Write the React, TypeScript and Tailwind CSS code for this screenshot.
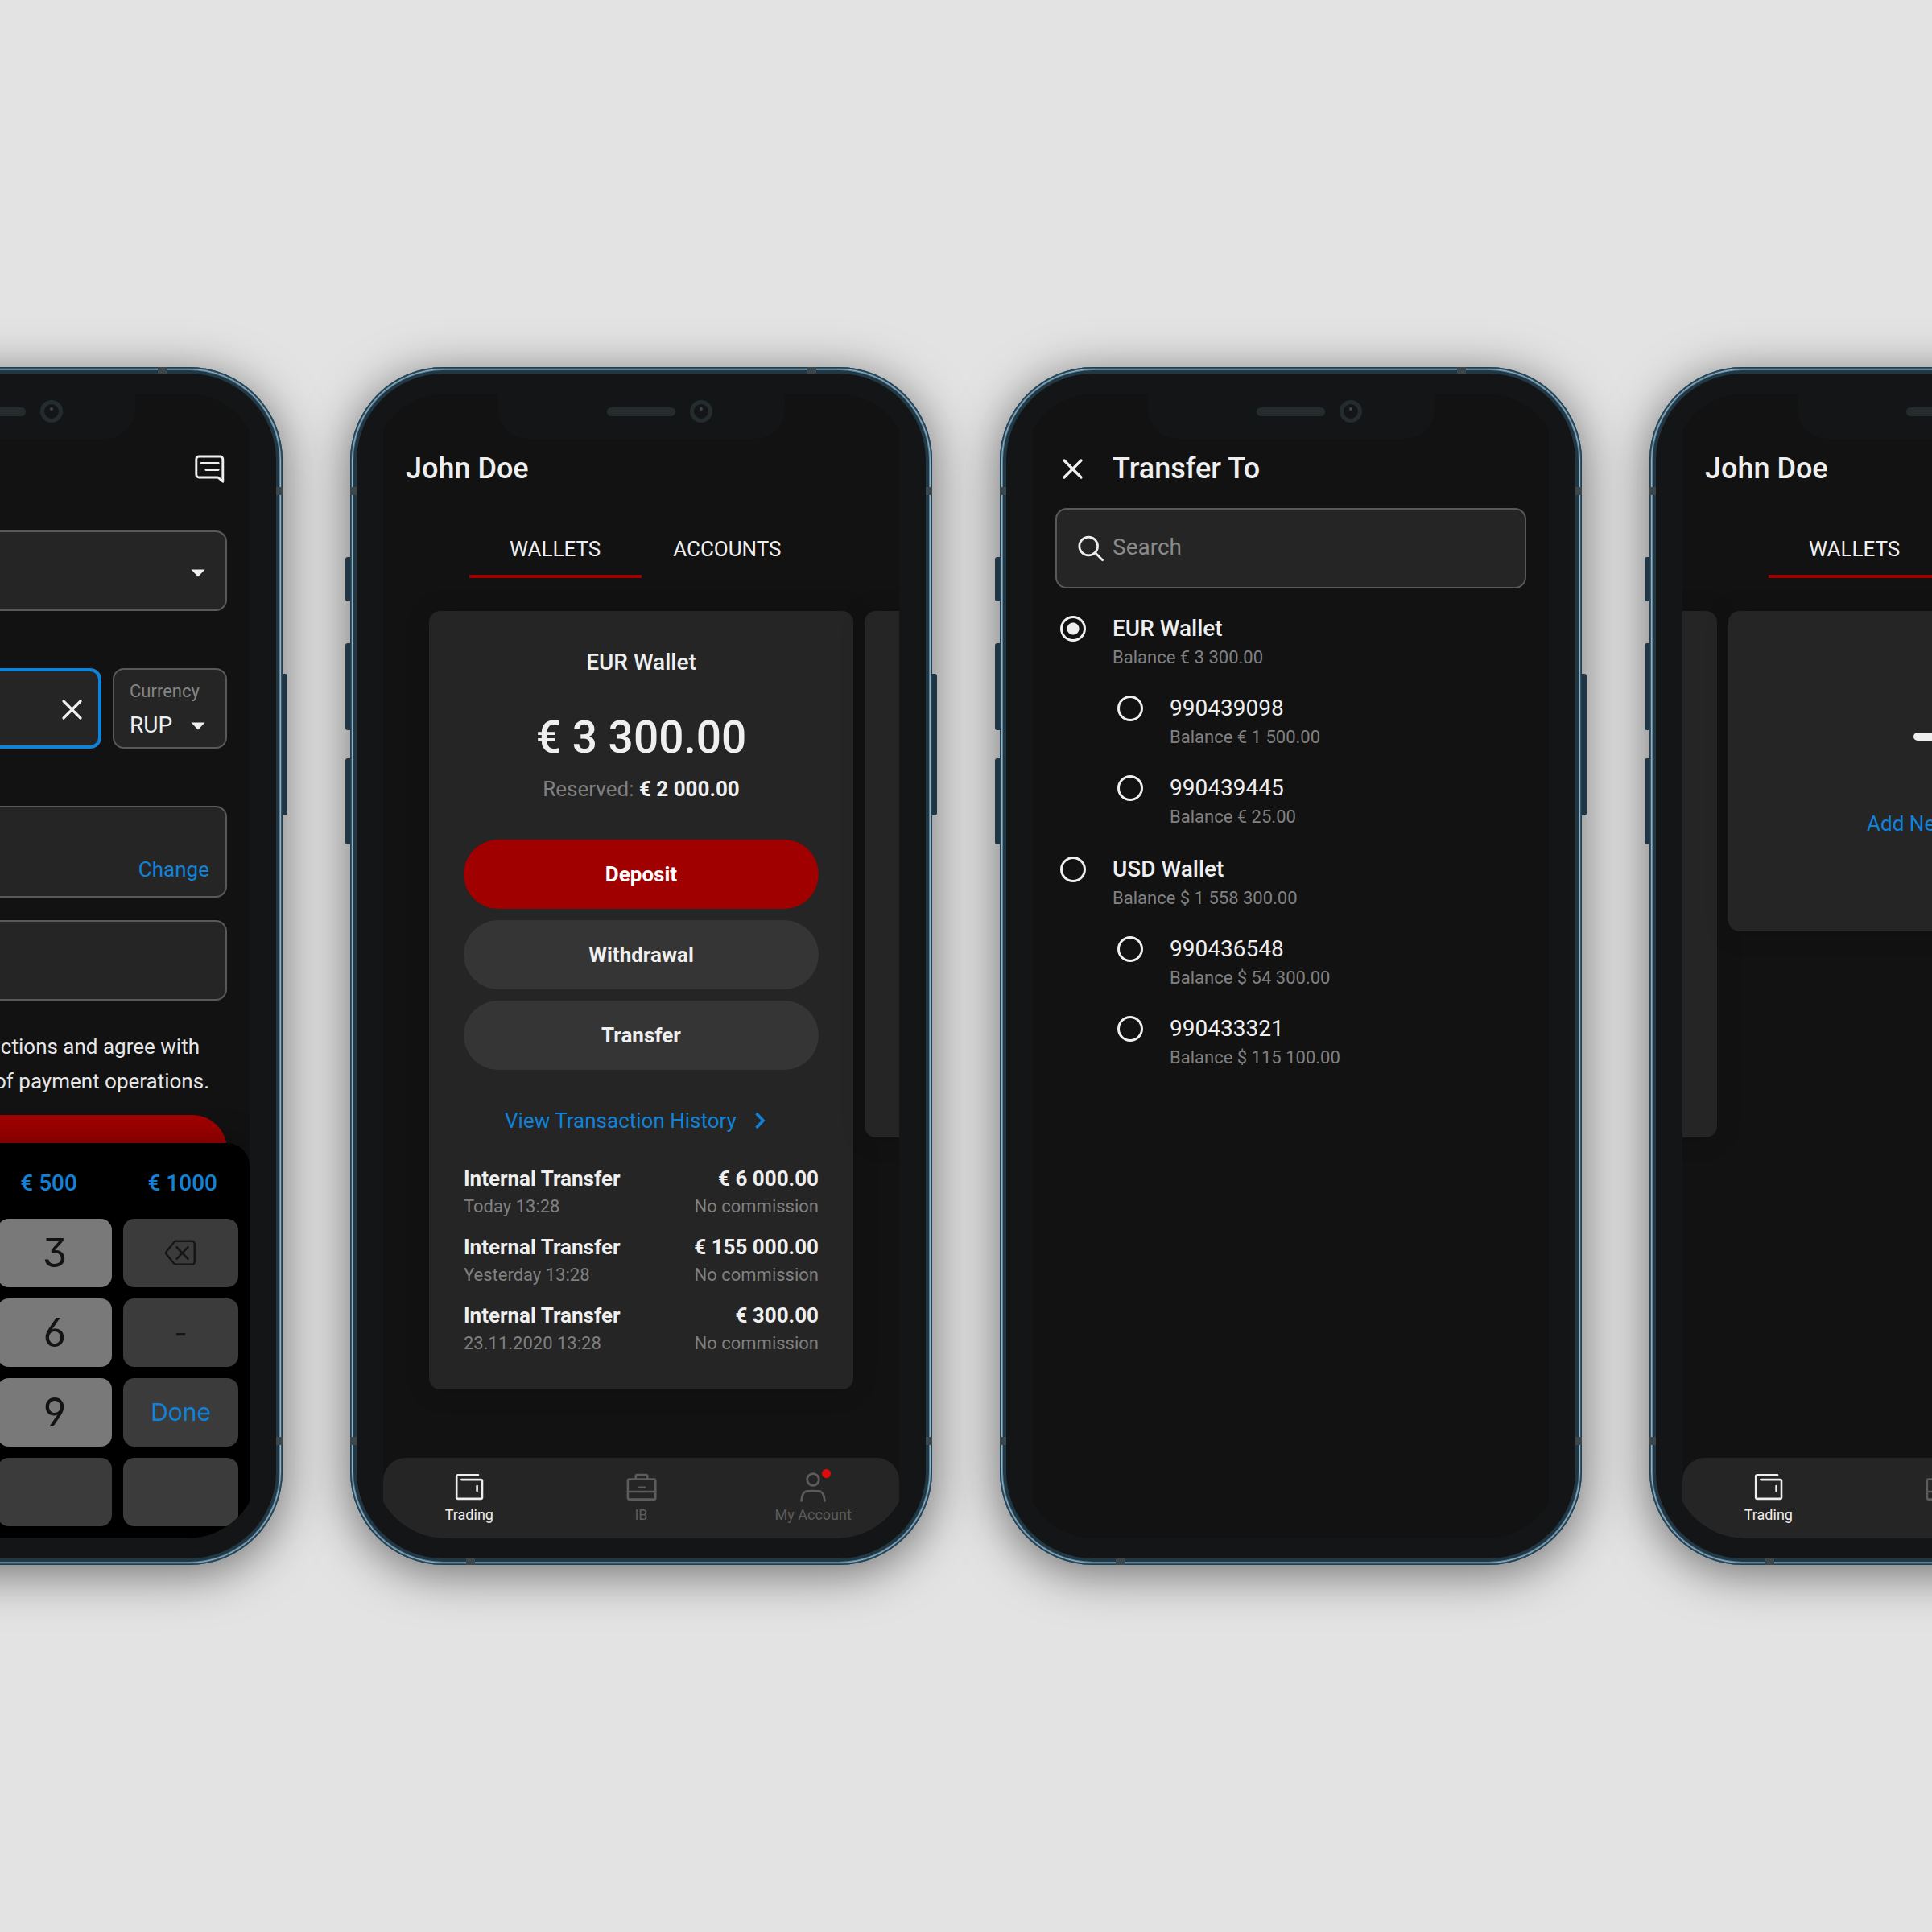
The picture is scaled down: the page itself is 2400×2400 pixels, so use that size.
import React from "react";

type IconProps = { className?: string };

const stroke = {
  fill: "none",
  stroke: "currentColor",
  strokeLinecap: "round" as const,
  strokeLinejoin: "round" as const,
};

const CloseIcon = ({ className = "" }: IconProps) => (
  <svg viewBox="0 0 43 43" className={`size-[43px] ${className}`} aria-hidden="true" {...stroke} strokeWidth={3.3}>
    <path d="M11 11 32 32M32 11 11 32" />
  </svg>
);

const ChatIcon = () => (
  <svg viewBox="0 0 43 43" className="size-[43px]" aria-hidden="true" {...stroke} strokeWidth={2.9}>
    <path d="M37.8 37.2V9.5A3.5 3.5 0 0 0 34.3 6h-26a3.5 3.5 0 0 0-3.5 3.5v19A3.5 3.5 0 0 0 8.3 32h23.4Z" />
    <path d="M11.2 14.5h21M16.8 22.5h15.4" />
  </svg>
);

const SearchIcon = () => (
  <svg viewBox="0 0 43 43" className="size-[43px] shrink-0" aria-hidden="true" {...stroke} strokeWidth={2.7}>
    <circle cx="19.2" cy="18.5" r="11.4" />
    <path d="m27.6 26.7 9 9" />
  </svg>
);

const CaretIcon = ({ className = "" }: IconProps) => (
  <svg viewBox="0 0 18 10" className={`h-[10px] w-[18px] ${className}`} aria-hidden="true" fill="currentColor">
    <path d="M0.5 0.5h17L9 9.5z" />
  </svg>
);

const ChevronIcon = () => (
  <svg viewBox="0 0 43 43" className="size-[43px]" aria-hidden="true" {...stroke} strokeWidth={3.6} strokeLinecap="butt" strokeLinejoin="miter">
    <path d="m16.500 12 8.600 9-8.600 9" />
  </svg>
);

const BackspaceIcon = () => (
  <svg viewBox="0 0 43 43" className="size-[43px]" aria-hidden="true" {...stroke} strokeWidth={2.4}>
    <path d="M15.5 6.800h20a3.200 3.200 0 0 1 3.200 3.200v22.600a3.200 3.200 0 0 1-3.200 3.200h-20a2.600 2.600 0 0 1-2-.900L3.700 23a2.400 2.400 0 0 1 0-3.200L13.500 7.700a2.600 2.600 0 0 1 2-.900Z" />
    <path d="m16.500 14.200 14 14.600M30.500 14.200l-14 14.600" />
  </svg>
);

const WalletIcon = () => (
  <svg viewBox="0 0 40 40" className="size-10" aria-hidden="true" {...stroke} strokeWidth={2.6}>
    <path d="M31 5.300H6A1.800 1.800 0 0 0 4.200 7.100v26.300a1.500 1.500 0 0 0 1.500 1.500h28.800a1.500 1.500 0 0 0 1.500-1.500V12.600a1.500 1.500 0 0 0-1.500-1.500H10.300" />
    <path d="M29.600 19v6" />
  </svg>
);

const BriefcaseIcon = () => (
  <svg viewBox="0 0 40 40" className="size-10" aria-hidden="true" {...stroke} strokeWidth={2.6}>
    <rect x="2.900" y="10.600" width="34.400" height="25" rx="1.600" />
    <path d="M12.800 10.200V6.600a1.500 1.500 0 0 1 1.500-1.500h11.500a1.500 1.500 0 0 1 1.500 1.500v3.600M3 26h34.200M16.300 20.800h7.800" />
  </svg>
);

const PersonIcon = () => (
  <svg viewBox="0 0 40 40" className="size-10" aria-hidden="true" {...stroke} strokeWidth={2.8}>
    <circle cx="20" cy="11" r="7.300" />
    <path d="M5.500 37.300c.8-7 2.200-10.200 5-11.300 3.200-1.300 15.800-1.300 19 0 2.800 1.100 4.200 4.300 5 11.300" />
  </svg>
);

const PlusIcon = () => (
  <svg viewBox="0 0 68 68" className="size-[68px]" aria-hidden="true" {...stroke} strokeWidth={10}>
    <path d="M5 34h58M34 5v58" />
  </svg>
);

function Phone({ children }: { children: React.ReactNode }) {
  const band = "absolute bg-[#3a484e]";
  const key = "absolute w-[6px] bg-[#1f3543]";
  return (
    <section className="relative flex min-h-[1488px] w-[723px] shrink-0 rounded-[116px] bg-[#213744] p-2 shadow-[inset_0_0_0_1px_#233f4e,inset_0_0_0_2px_#36566a,inset_0_0_0_3px_#8fb2c8,inset_0_0_0_4px_#5f8296,0_10px_60px_rgba(0,0,0,0.52)]">
      <span className={`${key} -left-[6px] top-[236px] h-[55px] rounded-l-[3px]`} />
      <span className={`${key} -left-[6px] top-[343px] h-[108px] rounded-l-[3px]`} />
      <span className={`${key} -left-[6px] top-[486px] h-[107px] rounded-l-[3px]`} />
      <span className={`${key} -right-[6px] top-[381px] h-[176px] rounded-r-[3px]`} />
      <span className={`${band} right-[144px] top-0 h-2 w-[11px]`} />
      <span className={`${band} bottom-0 left-[144px] h-2 w-[11px]`} />
      <span className={`${band} left-0 top-[149px] h-[10px] w-2`} />
      <span className={`${band} right-0 top-[149px] h-[10px] w-2`} />
      <span className={`${band} bottom-[149px] left-0 h-[10px] w-2`} />
      <span className={`${band} bottom-[149px] right-0 h-[10px] w-2`} />
      <div className="flex w-full rounded-[108px] bg-[#131516] px-[21px] py-[25px]">
        <div className="relative flex w-full overflow-hidden rounded-[90px] px-3">
          <div className="relative flex w-full min-w-0 flex-col overflow-hidden bg-[#121212] pt-11">
            {children}
          </div>
          <div className="absolute left-1/2 top-0 flex h-14 w-[356px] -translate-x-1/2 items-center justify-center rounded-b-[36px] bg-[#131516]">
            <span className="mb-[11px] h-[11px] w-[85px] rounded-full bg-[#252c2d]" />
            <span className="absolute right-[90px] top-2 size-7 rounded-full border-[5px] border-[#252c2d]">
              <span className="absolute left-[7px] top-1 size-1 rounded-full bg-[#3d4648]" />
            </span>
          </div>
        </div>
      </div>
    </section>
  );
}

const Header = ({ children }: { children: React.ReactNode }) => (
  <header className="flex h-[98px] shrink-0 items-center px-7 text-[36px] leading-[42px] font-medium">{children}</header>
);

function DepositScreen() {
  const field = "w-full rounded-[14px] border-2 border-[#595959] bg-[#252525]";
  const keys: { label: React.ReactNode; name: string; tone: string }[] = [
    { label: "1", name: "1", tone: "digit" },
    { label: "2", name: "2", tone: "digit" },
    { label: "3", name: "3", tone: "digit" },
    { label: <BackspaceIcon />, name: "Backspace", tone: "dark" },
    { label: "4", name: "4", tone: "digit" },
    { label: "5", name: "5", tone: "digit" },
    { label: "6", name: "6", tone: "digit" },
    { label: "-", name: "Minus", tone: "dark" },
    { label: "7", name: "7", tone: "digit" },
    { label: "8", name: "8", tone: "digit" },
    { label: "9", name: "9", tone: "digit" },
    { label: "Done", name: "Done", tone: "done" },
    { label: ",", name: "Comma", tone: "dark" },
    { label: "0", name: "0", tone: "digit" },
    { label: "", name: "Blank", tone: "dark" },
    { label: "", name: "Blank", tone: "dark" },
  ];
  const tones: Record<string, string> = {
    digit: "bg-[#797979] text-[49px] text-[#131313]",
    dark: "bg-[#3b3b3b] text-[34px] text-[#151515] font-medium",
    done: "bg-[#3b3b3b] text-[30px] text-[#1182da]",
  };
  return (
    <>
      <Header>
        <h2>Deposit</h2>
        <button type="button" aria-label="Messages" className="ml-auto">
          <ChatIcon />
        </button>
      </Header>
      <form className="flex flex-col px-7 pt-7">
        <div className="relative">
          <select aria-label="Account" className={`${field} block h-[100px] appearance-none px-5 text-[28px]`}>
            <option>EUR Wallet</option>
          </select>
          <CaretIcon className="pointer-events-none absolute right-[27px] top-12" />
        </div>
        <div className="mt-[71px] flex gap-[14px]">
          <div className="flex h-[100px] min-w-0 flex-1 items-center rounded-[14px] border-4 border-[#1182da] bg-[#252525] pt-[2px] pr-[11px]">
            <input aria-label="Amount" className="min-w-0 flex-1 bg-transparent px-4 text-[28px] outline-none" />
            <button type="button" aria-label="Clear amount">
              <CloseIcon />
            </button>
          </div>
          <label className="relative flex h-[100px] w-[142px] shrink-0 flex-col rounded-[14px] border-2 border-[#595959] bg-[#252525] px-[19px] pt-[10px]">
            <span className="text-[22px] leading-[34px] text-[#858585]">Currency</span>
            <select className="h-[50px] w-full appearance-none bg-transparent text-[28px] leading-[50px]">
              <option>RUP</option>
            </select>
            <CaretIcon className="pointer-events-none absolute right-[25px] top-[65px]" />
          </label>
        </div>
        <div className={`${field} mt-[71px] flex h-[114px] items-end justify-end px-5 pb-[13px]`}>
          <a href="#change" className="text-[26px] leading-[40px] text-[#1182da]">
            Change
          </a>
        </div>
        <input aria-label="Comment" className={`${field} mt-7 h-[100px] px-5 text-[28px] outline-none`} />
        <p className="mt-9 pr-[22px] text-right text-[26px] leading-[43px] whitespace-nowrap text-[#e6e6e6]">
          <span className="block pr-3">I have read the instructions and agree with</span>
          <span className="block">the terms and rules of payment operations.</span>
        </p>
        <button type="button" className="mt-5 h-[86px] w-full rounded-full bg-[#a00000] pt-2 text-[26px] font-bold text-white">
          Deposit
        </button>
      </form>
      <div className="absolute inset-x-0 bottom-0 rounded-t-[28px] bg-black pb-[15px] shadow-[0_0_40px_rgba(0,0,0,0.4)]">
        <div className="flex h-[94px] items-center justify-between px-10 pt-[6px] text-[28px] leading-[36px] font-medium text-[#1182da]">
          {["€ 100", "€ 200", "€ 500", "€ 1000"].map((amount) => (
            <button type="button" key={amount}>
              {amount}
            </button>
          ))}
        </div>
        <div className="grid grid-cols-4 gap-[14px] px-[14px]">
          {keys.map((k, i) => (
            <button
              type="button"
              key={i}
              aria-label={k.name}
              className={`flex h-[85px] items-center justify-center rounded-[14px] font-['Inter',sans-serif] [font-feature-settings:'ss01','cv09'] ${tones[k.tone]}`}
            >
              {k.label}
            </button>
          ))}
        </div>
      </div>
    </>
  );
}

const Tabs = () => (
  <div role="tablist" className="mt-[14px] flex shrink-0 justify-center">
    <button type="button" role="tab" aria-selected="true" className="h-[73px] w-1/3 border-b-4 border-[#a00000] pt-[5px] text-[26px]">
      WALLETS
    </button>
    <button type="button" role="tab" aria-selected="false" className="h-[73px] w-1/3 border-b-4 border-transparent pt-[5px] text-[26px]">
      ACCOUNTS
    </button>
  </div>
);

const NavBar = () => (
  <nav className="mt-auto flex h-[100px] shrink-0 rounded-t-[28px] bg-[#252525] text-[18px] leading-5 text-[#5c5c5c]">
    <button type="button" className="flex flex-1 flex-col items-center gap-[5px] pt-4 text-[#efefef]">
      <WalletIcon />
      Trading
    </button>
    <button type="button" className="flex flex-1 flex-col items-center gap-[5px] pt-4">
      <BriefcaseIcon />
      IB
    </button>
    <button type="button" className="flex flex-1 flex-col items-center gap-[5px] pt-4">
      <span className="relative">
        <PersonIcon />
        <span className="absolute -right-[2px] -top-[2px] size-[11px] rounded-full bg-[#dd0b0b]" />
      </span>
      My Account
    </button>
  </nav>
);

const cardStyle = "w-full shrink-0 rounded-[14px] bg-[#252525] shadow-[0_2px_32px_rgba(0,0,0,0.15)]";

function WalletScreen() {
  const transactions = [
    { amount: "€ 6 000.00", time: "Today 13:28" },
    { amount: "€ 155 000.00", time: "Yesterday 13:28" },
    { amount: "€ 300.00", time: "23.11.2020 13:28" },
  ];
  const pill = "h-[86px] w-full rounded-full text-[26px] font-bold";
  return (
    <>
      <Header>
        <h2>John Doe</h2>
      </Header>
      <Tabs />
      <div className="mt-[41px] flex items-start gap-[14px] px-[57px]">
        <article className={`${cardStyle} flex flex-col px-[43px] pt-11 pb-[41px] text-center`}>
          <h3 className="text-[28px] leading-[40px] font-medium">EUR Wallet</h3>
          <p className="mt-[37px] text-[55px] leading-[72px] font-medium">€ 3 300.00</p>
          <p className="mt-2 text-[26px] leading-[40px]">
            <span className="text-[#808080]">Reserved:</span> <strong>€ 2 000.00</strong>
          </p>
          <div className="mt-[43px] flex flex-col gap-[14px]">
            <button type="button" className={`${pill} bg-[#a00000] text-white`}>Deposit</button>
            <button type="button" className={`${pill} bg-[#353535]`}>Withdrawal</button>
            <button type="button" className={`${pill} bg-[#353535]`}>Transfer</button>
          </div>
          <a href="#history" className="mt-[43px] flex h-10 items-center justify-center gap-2 text-[26px] text-[#1182da]">
            View Transaction History
            <ChevronIcon />
          </a>
          <ul className="mt-[33px] flex flex-col gap-[15px]">
            {transactions.map((t) => (
              <li key={t.amount} className="flex justify-between">
                <div className="text-left">
                  <p className="text-[26px] leading-[38px] font-bold">Internal Transfer</p>
                  <p className="text-[22px] leading-[32px] text-[#808080]">{t.time}</p>
                </div>
                <div className="text-right">
                  <p className="text-[26px] leading-[38px] font-bold">{t.amount}</p>
                  <p className="text-[22px] leading-[32px] text-[#808080]">No commission</p>
                </div>
              </li>
            ))}
          </ul>
        </article>
        <article className={`${cardStyle} h-[654px]`} />
      </div>
      <NavBar />
    </>
  );
}

type Account = { id: string; name: string; balance: string };

const Radio = ({ account, main = false }: { account: Account; main?: boolean }) => (
  <label className={`flex gap-7 ${main ? "" : "ml-[71px]"}`}>
    <span className="flex h-[38px] w-[43px] shrink-0 items-center justify-center">
      <input
        type="radio"
        name="destination"
        defaultChecked={account.id === "eur"}
        className="size-8 appearance-none rounded-full border-[3px] border-[#efefef] checked:bg-[radial-gradient(circle,#efefef_7px,transparent_8px)]"
      />
    </span>
    <span className="flex flex-col">
      <span className={`text-[28px] leading-[37px] ${main ? "font-medium" : ""}`}>{account.name}</span>
      <span className="text-[22px] leading-[36px] text-[#808080]">Balance {account.balance}</span>
    </span>
  </label>
);

function TransferScreen() {
  const groups: Account[][] = [
    [
      { id: "eur", name: "EUR Wallet", balance: "€ 3 300.00" },
      { id: "a1", name: "990439098", balance: "€ 1 500.00" },
      { id: "a2", name: "990439445", balance: "€ 25.00" },
    ],
    [
      { id: "usd", name: "USD Wallet", balance: "$ 1 558 300.00" },
      { id: "a3", name: "990436548", balance: "$ 54 300.00" },
      { id: "a4", name: "990433321", balance: "$ 115 100.00" },
    ],
  ];
  return (
    <>
      <Header>
        <button type="button" aria-label="Close" className="mr-7">
          <CloseIcon />
        </button>
        <h2>Transfer To</h2>
      </Header>
      <div className="flex flex-col px-7">
        <label className="flex h-[100px] items-center gap-[6px] rounded-[14px] border-2 border-[#595959] bg-[#252525] px-5">
          <SearchIcon />
          <input type="search" aria-label="Search" placeholder="Search" className="min-w-0 flex-1 bg-transparent pb-[2px] text-[28px] leading-[40px] outline-none placeholder:text-[#8a8a8a]" />
        </label>
        <div className="mt-[31px] flex flex-col gap-7">
          {groups.map((group) => (
            <div key={group[0].id} className="flex flex-col gap-[26px]">
              {group.map((account, i) => (
                <Radio key={account.id} account={account} main={i === 0} />
              ))}
            </div>
          ))}
        </div>
      </div>
    </>
  );
}

function AddWalletScreen() {
  return (
    <>
      <Header>
        <h2>John Doe</h2>
      </Header>
      <Tabs />
      <div className="mt-[41px] flex items-start justify-end gap-[14px] px-[57px]">
        <article className={`${cardStyle} h-[654px]`} />
        <article className={`${cardStyle} flex flex-col items-center pt-[122px] pb-[114px]`}>
          <PlusIcon />
          <a href="#add-wallet" className="mt-[54px] text-[26px] leading-[40px] text-[#1182da]">
            Add New Wallet
          </a>
        </article>
      </div>
      <NavBar />
    </>
  );
}

export default function App() {
  return (
    <main className="flex min-h-screen items-center justify-center gap-[84px] overflow-hidden bg-[#e3e3e3] font-['Roboto',sans-serif] text-[#efefef]">
      <Phone>
        <DepositScreen />
      </Phone>
      <Phone>
        <WalletScreen />
      </Phone>
      <Phone>
        <TransferScreen />
      </Phone>
      <Phone>
        <AddWalletScreen />
      </Phone>
    </main>
  );
}
